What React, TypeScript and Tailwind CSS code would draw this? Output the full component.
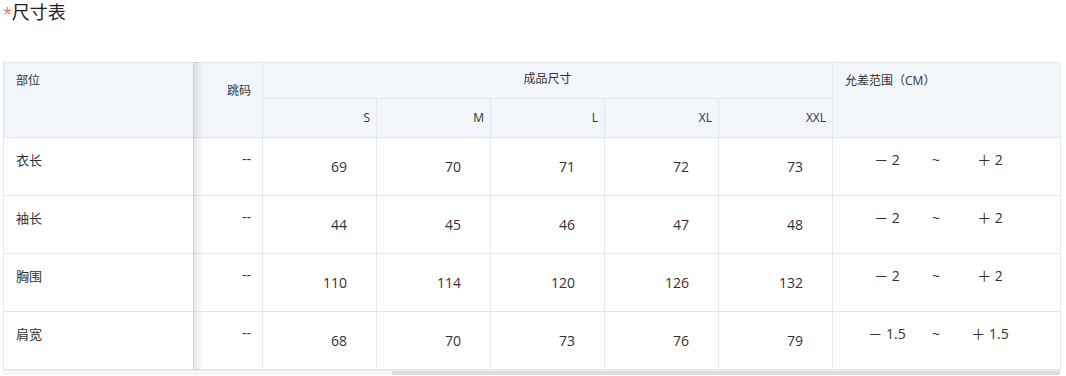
import React from "react";

const rows = [
  { name: "衣长", vals: [69, 70, 71, 72, 73], tol: "2" },
  { name: "袖长", vals: [44, 45, 46, 47, 48], tol: "2" },
  { name: "胸围", vals: [110, 114, 120, 126, 132], tol: "2" },
  { name: "肩宽", vals: [68, 70, 73, 76, 79], tol: "1.5" },
];

const sizes = ["S", "M", "L", "XL", "XXL"];

export default function App() {
  return (
    <div
      className="w-[1066px] h-[376px] bg-white text-[#303133] overflow-hidden"
      style={{ fontFamily: '"Open Sans", "Noto Sans CJK SC", sans-serif' }}
    >
      <div className="pl-[3px] pt-[1px] text-[18px] leading-[22px] text-[#222]">
        <span className="text-[#f56c6c] text-[16px]">*</span>尺寸表
      </div>
      <div className="ml-[3px] mt-[38px] w-[1058px]">
        <div className="relative rounded-tr-[4px] overflow-hidden border-r border-[#e4e7ed]">
          <table className="table-fixed border-collapse w-[1057px]">
            <colgroup>
              <col className="w-[190px]" />
              <col className="w-[69px]" />
              <col className="w-[114px]" />
              <col className="w-[114px]" />
              <col className="w-[114px]" />
              <col className="w-[114px]" />
              <col className="w-[114px]" />
              <col className="w-[228px]" />
            </colgroup>
            <thead>
              <tr className="h-[36px] bg-[#f2f5f9]">
                <th
                  rowSpan={2}
                  className="border border-[#e2e5ea] align-top text-left font-normal text-[12px] leading-[20px] pl-[12px] pt-[8px] text-[#333]"
                >
                  部位
                </th>
                <th
                  rowSpan={2}
                  className="border border-[#e2e5ea] align-top text-right font-normal text-[12px] leading-[20px] pr-[11px] pt-[18px] text-[#333]"
                >
                  跳码
                </th>
                <th
                  colSpan={5}
                  className="border border-[#e2e5ea] align-middle text-center font-normal text-[12px] leading-[20px] pb-[3px] text-[#333]"
                >
                  成品尺寸
                </th>
                <th
                  rowSpan={2}
                  className="border border-[#e2e5ea] align-top text-left font-normal text-[12px] leading-[20px] pl-[12px] pt-[8px] text-[#333]"
                >
                  允差范围（CM）
                </th>
              </tr>
              <tr className="h-[39px] bg-[#f2f5f9]">
                {sizes.map((s) => (
                  <th
                    key={s}
                    className="border border-[#e2e5ea] align-middle text-right font-normal text-[12px] leading-[20px] pr-[6px] text-[#333]"
                  >
                    {s}
                  </th>
                ))}
              </tr>
            </thead>
            <tbody>
              {rows.map((r) => (
                <tr key={r.name} className="h-[58px]">
                  <td className="border border-[#e4e7ed] align-top text-left text-[13px] leading-[20px] pl-[12px] pt-[12px]">
                    {r.name}
                  </td>
                  <td className="border border-[#e4e7ed] align-top text-right text-[14px] leading-[20px] pr-[11px] pt-[11px]">
                    --
                  </td>
                  {r.vals.map((v, i) => (
                    <td
                      key={i}
                      className="border border-[#e4e7ed] align-middle text-right text-[14px] leading-[20px] pr-[29px]"
                    >
                      {v}
                    </td>
                  ))}
                  <td className="border border-[#e4e7ed] align-top text-[14px] leading-[20px] pt-[12px]">
                    <div className="flex pl-[24px]">
                      <span className="w-[60px] text-center whitespace-nowrap">－ {r.tol}</span>
                      <span className="w-[38px] text-center">~</span>
                      <span className="w-[70px] text-center whitespace-nowrap">＋ {r.tol}</span>
                    </div>
                  </td>
                </tr>
              ))}
            </tbody>
          </table>
          <div className="pointer-events-none absolute top-0 bottom-0 left-[190px] w-[10px] bg-gradient-to-r from-[rgba(0,0,0,0.10)] to-transparent" />
        </div>
        <div className="h-[5px] w-[1057px] bg-[#f7f7f7] border-t border-[#ececec] flex">
          <div className="ml-[389px] w-[668px] h-full bg-[#dcdcdc]" />
        </div>
      </div>
    </div>
  );
}
